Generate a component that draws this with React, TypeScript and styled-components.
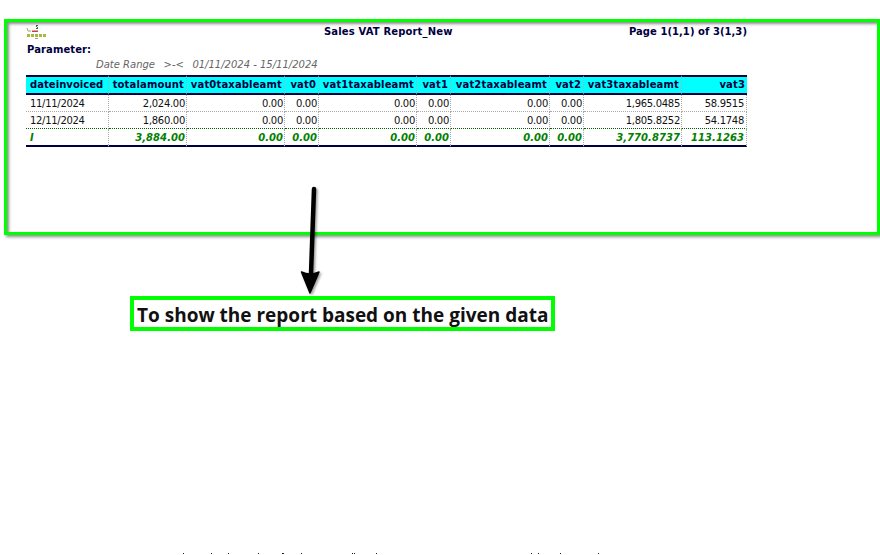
import React from "react";
import styled, { createGlobalStyle } from "styled-components";

const Global = createGlobalStyle`
  html, body { margin: 0; padding: 0; background: #fff; overflow: hidden; }
  #root { width: 880px; height: 555px; overflow: hidden; }
`;
const Page = styled.div`
  position: relative;
  width: 880px;
  height: 555px;
  padding: 19px 0 0 4px;
  box-sizing: border-box;
  font-family: "DejaVu Sans", sans-serif;
  color: #000;
`;
const Frame = styled.section`
  width: 876px;
  height: 216px;
  box-sizing: border-box;
  border: 3px solid #00ff00;
  padding: 3px 0 0 19px;
  box-shadow: 2px 2px 3px rgba(0,0,0,.45), inset 2px 2px 3px rgba(0,0,0,.45);
`;
const Report = styled.div`
  width: 721px;
`;
const HeaderRow = styled.header`
  display: grid;
  grid-template-columns: 298px 1fr auto;
  align-items: start;
  height: 18px;
  font-size: 10px;
  font-weight: 700;
  color: #000040;
  line-height: 12px;
`;
const Title = styled.div`
  padding-top: 1px;
  letter-spacing: 0.15px;
`;
const PageInfo = styled.div`
  padding-top: 1px;
  letter-spacing: 0.05px;
`;
const Logo = styled.svg`
  display: block;
  width: 21px;
  height: 15px;
`;
const ParamLabel = styled.div`
  font-size: 10px;
  font-weight: 700;
  letter-spacing: 0.1px;
  color: #000040;
  line-height: 13px;
  padding-left: 1px;
`;
const ParamRow = styled.div`
  display: flex;
  font-size: 10px;
  font-style: italic;
  color: #666;
  line-height: 12px;
  margin-top: 3px;
  height: 12px;
  padding-left: 70px;
  white-space: pre;
`;
const ParamPart = styled.span`
  margin-left: 8.5px;
  &:first-child { margin-left: 0; }
`;
const Table = styled.table`
  border-collapse: separate;
  border-spacing: 0;
  table-layout: fixed;
  width: 721px;
  margin-top: 4px;
  font-size: 10px;
`;
const Col = styled.col<{ $w: number }>`
  width: ${(p) => p.$w}px;
`;
const Th = styled.th<{ $first?: boolean; $last?: boolean }>`
  height: 16px;
  padding: 0 2px 0 ${(p) => (p.$first ? 4 : 1)}px;
  background: #00ffff;
  color: #000040;
  font-weight: 700;
  font-size: 10px;
  letter-spacing: ${(p) => (p.$first ? 0.05 : 0.15)}px;
  text-align: ${(p) => (p.$first ? "left" : "right")};
  white-space: nowrap;
  overflow: hidden;
  border-top: 2px solid #000040;
  border-bottom: 2px solid #000040;
  border-right: ${(p) => (p.$last ? "0" : "1px dotted #aaa")};
  line-height: 14px;
`;
const Td = styled.td<{ $first?: boolean; $last?: boolean }>`
  height: 15px;
  padding: 1px ${(p) => (p.$last ? 2 : 1)}px 0 ${(p) => (p.$first ? 4 : 1)}px;
  text-align: ${(p) => (p.$first ? "left" : "right")};
  white-space: nowrap;
  overflow: hidden;
  color: #111;
  letter-spacing: -0.3px;
  border-right: 1px dotted #aaa;
  border-bottom: 1px dotted #aaa;
  line-height: 14px;
`;
const TotalTd = styled(Td)`
  color: #008000;
  font-weight: 700;
  font-style: italic;
  letter-spacing: 0.05px;
  border-bottom: 2px solid #000040;
`;
const LastDataTd = styled(Td)`
  border-bottom: 1px dotted #006000;
`;
const Arrow = styled.svg`
  position: absolute;
  left: 292px;
  top: 180px;
  width: 40px;
  height: 120px;
`;
const Caption = styled.div`
  position: absolute;
  left: 130px;
  top: 296px;
  width: 425px;
  height: 35px;
  box-sizing: border-box;
  border: 4px solid #00ff00;
  padding-left: 3px;
  font-family: "Open Sans", "Noto Sans", sans-serif;
  font-size: 19px;
  font-weight: 700;
  line-height: 31px;
  color: #111;
  white-space: nowrap;
  overflow: hidden;
`;
const Specks = styled.svg`
  position: absolute;
  left: 0;
  bottom: 0;
  width: 880px;
  height: 2px;
`;

const widths = [83, 78, 98, 34, 98, 34, 99, 34, 98, 65];
const heads = ["dateinvoiced","totalamount","vat0taxableamt","vat0","vat1taxableamt","vat1","vat2taxableamt","vat2","vat3taxableamt","vat3"];
const rows = [
  ["11/11/2024","2,024.00","0.00","0.00","0.00","0.00","0.00","0.00","1,965.0485","58.9515"],
  ["12/11/2024","1,860.00","0.00","0.00","0.00","0.00","0.00","0.00","1,805.8252","54.1748"],
];
const total = ["I","3,884.00","0.00","0.00","0.00","0.00","0.00","0.00","3,770.8737","113.1263"];
const specks = [183, 211, 228, 258, 282, 283, 301, 352, 354, 376, 531, 538, 560, 598];

export default function App() {
  return (
    <Page>
      <Global />
      <Frame>
        <Report>
          <HeaderRow>
            <Logo viewBox="0 0 21 15">
              <path d="M1 3l1 3h2M4 6h1" stroke="#a8a860" strokeWidth="1" fill="none" />
              <path d="M10 0h2v1h-1v1h1v2h-2V3h1V2h-1z" fill="#1f7a3a" />
              <rect x="6" y="5.5" width="6" height="1.5" fill="#c84040" />
              <path d="M1 10.5h19" stroke="#a8b840" strokeWidth="3" strokeDasharray="3 1" />
              <rect x="9" y="13" width="3" height="1" fill="#b090c0" />
            </Logo>
            <Title>Sales VAT Report_New</Title>
            <PageInfo>Page 1(1,1) of 3(1,3)</PageInfo>
          </HeaderRow>
          <ParamLabel>Parameter:</ParamLabel>
          <ParamRow>
            <ParamPart>Date Range</ParamPart>
            <ParamPart>&gt;-&lt;</ParamPart>
            <ParamPart>01/11/2024 - 15/11/2024</ParamPart>
          </ParamRow>
          <Table>
            <colgroup>
              {widths.map((w, i) => <Col key={i} $w={w} />)}
            </colgroup>
            <thead>
              <tr>
                {heads.map((h, i) => <Th key={h} $first={i === 0} $last={i === 9}>{h}</Th>)}
              </tr>
            </thead>
            <tbody>
              {rows.map((r, ri) => (
                <tr key={ri}>
                  {r.map((c, i) =>
                    ri === 1
                      ? <LastDataTd key={i} $first={i === 0} $last={i === 9}>{c}</LastDataTd>
                      : <Td key={i} $first={i === 0} $last={i === 9}>{c}</Td>
                  )}
                </tr>
              ))}
              <tr>
                {total.map((c, i) => <TotalTd key={i} $first={i === 0} $last={i === 9}>{c}</TotalTd>)}
              </tr>
            </tbody>
          </Table>
        </Report>
      </Frame>
      <Arrow viewBox="0 0 40 120">
        <defs>
          <filter id="s" x="-50%" y="-10%" width="200%" height="120%">
            <feDropShadow dx="1.5" dy="1.5" stdDeviation="1.2" floodColor="#000" floodOpacity="0.4" />
          </filter>
        </defs>
        <g filter="url(#s)">
          <path d="M22 9 L19 94" stroke="#000" strokeWidth="4.5" strokeLinecap="round" fill="none" />
          <path d="M9.5 92 Q18 96 27 92 L18 113 Z" fill="#000" stroke="#000" strokeWidth="1.5" strokeLinejoin="round" />
        </g>
      </Arrow>
      <Caption>To show the report based on the given data</Caption>
      <Specks viewBox="0 0 880 2">
        {specks.map((x) => <rect key={x} x={x} y="0" width="1" height="1" fill="#222" />)}
      </Specks>
    </Page>
  );
}
